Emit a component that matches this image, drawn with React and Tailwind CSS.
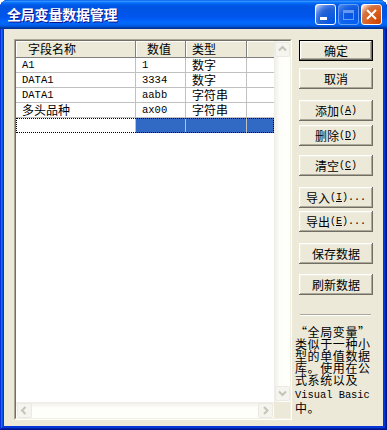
import React from 'react';

const cjk = "font-['Noto_Sans_CJK_SC','Liberation_Sans',sans-serif]";
const mono = "font-['Liberation_Mono','Noto_Sans_CJK_SC',monospace]";

const rows = [
  ['A1', '1', '数字'],
  ['DATA1', '3334', '数字'],
  ['DATA1', 'aabb', '字符串'],
  ['多头品种', 'ax00', '字符串'],
];

// pick the font for grid text: CJK strings or SimSun-like latin
function Txt({ children }) {
  const hasCjk = /[\u4e00-\u9fff]/.test(children);
  if (hasCjk) return <span className={cjk + ' text-[12px] leading-[14px]'}>{children}</span>;
  return <span className={mono + ' text-[10.5px] leading-[14px]'}>{children}</span>;
}

function Chevron({ dir }) {
  const pts = {
    up: '1,5.5 4.5,2 8,5.5',
    down: '1,2.5 4.5,6 8,2.5',
    left: '5.5,1 2,4.5 5.5,8',
    right: '3,1 6.5,4.5 3,8',
  }[dir];
  return (
    <svg width="9" height="9" viewBox="0 0 9 9">
      <polyline points={pts} fill="none" stroke="#c5c4b6" strokeWidth="2" />
    </svg>
  );
}

function ScrollBtn({ dir }) {
  return (
    <div className="w-[15px] h-[15px] shrink-0 rounded-[2px] border border-[#ebeae2] bg-[#f5f4ef] flex items-center justify-center">
      <Chevron dir={dir} />
    </div>
  );
}

function Button({ children, def, className = '' }) {
  const base =
    'w-[74px] h-[21px] flex items-center justify-center bg-[#ece9d8] text-black ' + cjk + ' text-[12px] ';
  if (def) {
    return (
      <div className={base + 'border border-black ' + className}>
        <div className="w-full h-full flex items-center justify-center shadow-[inset_-1px_-1px_#716f64,inset_1px_1px_#ffffff,inset_-2px_-2px_#aca899,inset_2px_2px_#f1efe2]">
          {children}
        </div>
      </div>
    );
  }
  return (
    <div className={base + 'shadow-[inset_-1px_-1px_#716f64,inset_1px_1px_#ffffff,inset_-2px_-2px_#aca899,inset_2px_2px_#f1efe2] ' + className}>
      {children}
    </div>
  );
}

function Key({ k, dots }) {
  return (
    <span className={mono + ' text-[10px]'}>
      (<u>{k}</u>){dots ? '...' : ''}
    </span>
  );
}

function TitleBar() {
  return (
    <div className="h-[29px] shrink-0 rounded-t-[8px] flex items-center pl-[7px] pr-[5px] bg-[linear-gradient(to_bottom,#0058ee_0%,#3593ff_4%,#288eff_6%,#127dff_8%,#036ffc_10%,#0262ee_14%,#0057e5_20%,#0054e3_24%,#0055eb_56%,#005bf5_66%,#026afe_76%,#0062ef_86%,#0052d6_92%,#0040ab_94%,#003092_100%)]">
      <div className={cjk + ' flex-1 text-white font-bold text-[14px] tracking-[-0.2px] [text-shadow:1px_1px_#0f1089]'}>
        全局变量数据管理
      </div>
      <div className="flex gap-[2px]">
        <div className="w-[21px] h-[21px] rounded-[3px] border border-white bg-[radial-gradient(circle_at_90%_90%,#0054e9_0%,#2263d5_55%,#4479e4_70%,#a3bbec_90%,#ffffff_100%)] flex items-end pl-[4px] pb-[4px]">
          <div className="w-[7px] h-[3px] bg-white" />
        </div>
        <div className="w-[21px] h-[21px] rounded-[3px] border border-white bg-[radial-gradient(circle_at_90%_90%,#0054e9_0%,#2263d5_55%,#4479e4_70%,#a3bbec_90%,#ffffff_100%)] opacity-40 flex items-center justify-center">
          <div className="w-[11px] h-[10px] border border-white border-t-[3px]" />
        </div>
        <div className="w-[21px] h-[21px] rounded-[3px] border border-white bg-[radial-gradient(circle_at_90%_90%,#cc4600_0%,#dc6527_55%,#cd7546_70%,#ffccb2_90%,#ffffff_100%)] flex items-center justify-center">
          <svg width="11" height="11" viewBox="0 0 11 11">
            <path d="M1 1 L10 10 M10 1 L1 10" stroke="#ffffff" strokeWidth="2" />
          </svg>
        </div>
      </div>
    </div>
  );
}

function Grid() {
  return (
    <div className="w-[278px] h-[381px] shrink-0 bg-white border border-t-[#aca899] border-l-[#aca899] border-b-white border-r-white">
      <div className="w-full h-full flex flex-col border border-t-[#716f64] border-l-[#716f64] border-b-[#f1efe2] border-r-[#f1efe2]">
        <div className="flex-1 flex min-h-0">
          <div className="flex-1 flex flex-col">
            {/* header */}
            <div className={cjk + ' flex h-[17px] text-[12px] leading-[15px] text-black'}>
              <div className="w-[120px] pl-[12px] bg-[#ece9d8] border-r border-b border-[#808080] shadow-[inset_1px_1px_#ffffff]">字段名称</div>
              <div className="w-[50px] pl-[11px] bg-[#ece9d8] border-r border-b border-[#808080] shadow-[inset_1px_1px_#ffffff]">数值</div>
              <div className="w-[61px] pl-[6px] bg-[#ece9d8] border-r border-b border-[#808080] shadow-[inset_1px_1px_#ffffff]">类型</div>
              <div className="flex-1 bg-[#ece9d8] border-b border-[#808080] shadow-[inset_1px_1px_#ffffff]" />
            </div>
            {rows.map((r, i) => (
              <div key={i} className="flex h-[15px] border-b border-[#c0c0c0]">
                <div className="w-[120px] pl-[6px] border-r border-[#c0c0c0] flex items-center"><Txt>{r[0]}</Txt></div>
                <div className="w-[50px] pl-[6px] border-r border-[#c0c0c0] flex items-center"><Txt>{r[1]}</Txt></div>
                <div className="w-[61px] pl-[6px] border-r border-[#c0c0c0] flex items-center"><Txt>{r[2]}</Txt></div>
                <div className="flex-1" />
              </div>
            ))}
            {/* current (new) row */}
            <div className="flex h-[15px] outline-1 outline-dotted outline-black -outline-offset-1">
              <div className="w-[120px] border-r border-[#c0c0c0]" />
              <div className="w-[50px] bg-[#316ac5] border-r border-[#c0c0c0]" />
              <div className="w-[61px] bg-[#316ac5] border-r border-[#c0c0c0]" />
              <div className="flex-1 bg-[#316ac5]" />
            </div>
          </div>
          {/* vertical scrollbar */}
          <div className="w-[16px] flex flex-col justify-between items-center py-[1px] bg-[linear-gradient(to_right,#eeede5,#fdfdfa_35%,#fefefb)]">
            <ScrollBtn dir="up" />
            <ScrollBtn dir="down" />
          </div>
        </div>
        {/* horizontal scrollbar */}
        <div className="h-[16px] flex shrink-0">
          <div className="flex-1 flex justify-between items-center px-[1px] bg-[linear-gradient(to_bottom,#eeede5,#fdfdfa_35%,#fefefb)]">
            <ScrollBtn dir="left" />
            <ScrollBtn dir="right" />
          </div>
          <div className="w-[16px] bg-[#ece9d8]" />
        </div>
      </div>
    </div>
  );
}

export default function App() {
  return (
    <div className="w-[387px] h-[430px] bg-white">
      <div className="w-[387px] h-[430px] flex flex-col rounded-t-[8px] bg-[#0831d9] shadow-[inset_-1px_-1px_#00138c,inset_1px_1px_#0831d9,inset_-2px_-2px_#001ea0,inset_2px_2px_#166aee,inset_-3px_-3px_#003bda,inset_3px_3px_#0855dd]">
        <TitleBar />
        <div className="flex-1 mx-[4px] mb-[4px] bg-[#ece9d8] flex pt-[10px] pl-[10px] pr-[10px] gap-[7px]">
          <Grid />
          <div className="w-[74px] flex flex-col">
            <Button def className="mt-[1px]">确定</Button>
            <Button className="mt-[7px]">取消</Button>
            <Button className="mt-[11px]">添加<Key k="A" /></Button>
            <Button className="mt-[4px]">删除<Key k="D" /></Button>
            <Button className="mt-[9px]">清空<Key k="C" /></Button>
            <Button className="mt-[11px]">导入<Key k="I" dots /></Button>
            <Button className="mt-[3px]">导出<Key k="E" dots /></Button>
            <Button className="mt-[11px]">保存数据</Button>
            <Button className="mt-[10px]">刷新数据</Button>
            <div className="mt-[19px] ml-[1px] w-[71px] border-t border-b border-t-[#aca899] border-b-white" />
            <div className={cjk + ' mt-[10px] -ml-[4px] w-[82px] text-[12px] leading-[12px] tracking-[0.6px] text-black'}>
              <div>“全局变量”</div>
              <div>类似于一种小</div>
              <div>型的单值数据</div>
              <div>库。使用在公</div>
              <div>式系统以及</div>
              <div className={mono + ' text-[10.4px] leading-[14px] mt-[2px] tracking-normal'}>Visual Basic</div>
              <div>中。</div>
            </div>
          </div>
        </div>
      </div>
    </div>
  );
}
